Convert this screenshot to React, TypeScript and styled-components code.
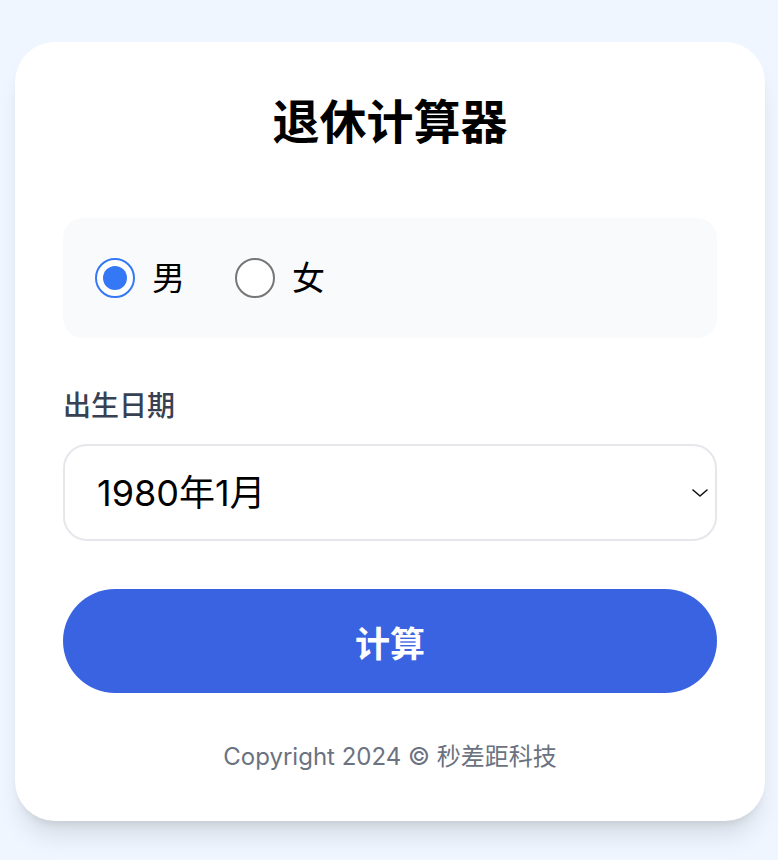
import { useState } from "react";
import styled, { createGlobalStyle } from "styled-components";

const GlobalStyle = createGlobalStyle`
  html, body {
    margin: 0;
    padding: 0;
    background: #eff6ff;
    font-family: "Inter", "Noto Sans CJK SC", sans-serif;
  }
  * { box-sizing: border-box; }
`;

const Page = styled.div`
  min-height: 860px;
  padding: 42px 13px 0 15px;
`;

const Card = styled.div`
  background: #ffffff;
  border-radius: 40px;
  padding: 48px 48px 48px;
  box-shadow: 0 20px 25px -5px rgba(0, 0, 0, 0.1), 0 8px 10px -6px rgba(0, 0, 0, 0.1);
`;

const Title = styled.h1`
  margin: 0 0 64px;
  font-size: 47px;
  line-height: 64px;
  font-weight: 700;
  text-align: center;
  color: #000;
`;

const GenderPanel = styled.div`
  display: flex;
  align-items: center;
  gap: 50px;
  padding: 40px 32px;
  background: #f9fafb;
  border-radius: 20px;
`;

const Option = styled.label`
  display: flex;
  align-items: center;
  gap: 17px;
  font-size: 33px;
  line-height: 40px;
  color: #000;
  cursor: pointer;
`;

const Radio = styled.input`
  appearance: none;
  margin: 0;
  width: 40px;
  height: 40px;
  border-radius: 50%;
  border: 2px solid #767676;
  background: #fff;
  display: grid;
  place-items: center;
  cursor: pointer;

  &:checked {
    border-color: #3478f6;
  }
  &:checked::after {
    content: "";
    width: 24px;
    height: 24px;
    border-radius: 50%;
    background: #3478f6;
  }
`;

const FieldLabel = styled.div`
  margin: 48px 0 18px;
  font-size: 28px;
  line-height: 40px;
  font-weight: 500;
  color: #374151;
`;

const SelectWrap = styled.div`
  position: relative;
`;

const Select = styled.select`
  appearance: none;
  width: 100%;
  height: 97px;
  padding: 0 60px 0 32px;
  border: 2px solid #e5e7eb;
  border-radius: 24px;
  background: #fff;
  font-family: inherit;
  font-size: 36px;
  color: #000;
  outline: none;
`;

const Chevron = styled.svg`
  position: absolute;
  right: 9px;
  top: 50%;
  width: 16px;
  height: 16px;
  margin-top: -8px;
  pointer-events: none;
`;

const Button = styled.button`
  display: block;
  width: 100%;
  height: 104px;
  margin-top: 48px;
  border: none;
  border-radius: 52px;
  background: #3a63e2;
  color: #fff;
  font-family: inherit;
  font-size: 35px;
  font-weight: 700;
  cursor: pointer;
`;

const Copyright = styled.div`
  margin-top: 48px;
  text-align: center;
  font-size: 24px;
  line-height: 32px;
  color: #6b7280;
`;

const months: string[] = [];
for (let y = 1960; y <= 2000; y++) {
  for (let m = 1; m <= 12; m++) months.push(`${y}年${m}月`);
}

export default function App() {
  const [gender, setGender] = useState("male");
  const [birth, setBirth] = useState("1980年1月");

  return (
    <>
      <GlobalStyle />
      <Page>
        <Card>
          <Title>退休计算器</Title>
          <GenderPanel>
            <Option>
              <Radio
                type="radio"
                name="gender"
                checked={gender === "male"}
                onChange={() => setGender("male")}
              />
              男
            </Option>
            <Option>
              <Radio
                type="radio"
                name="gender"
                checked={gender === "female"}
                onChange={() => setGender("female")}
              />
              女
            </Option>
          </GenderPanel>
          <FieldLabel>出生日期</FieldLabel>
          <SelectWrap>
            <Select value={birth} onChange={(e) => setBirth(e.target.value)}>
              {months.map((m) => (
                <option key={m} value={m}>
                  {m}
                </option>
              ))}
            </Select>
            <Chevron viewBox="0 0 16 16" fill="none">
              <path d="M1 5l7 6 7-6" stroke="#111" strokeWidth="1.6" strokeLinecap="round" strokeLinejoin="round" />
            </Chevron>
          </SelectWrap>
          <Button>计算</Button>
          <Copyright>Copyright 2024 © 秒差距科技</Copyright>
        </Card>
      </Page>
    </>
  );
}
